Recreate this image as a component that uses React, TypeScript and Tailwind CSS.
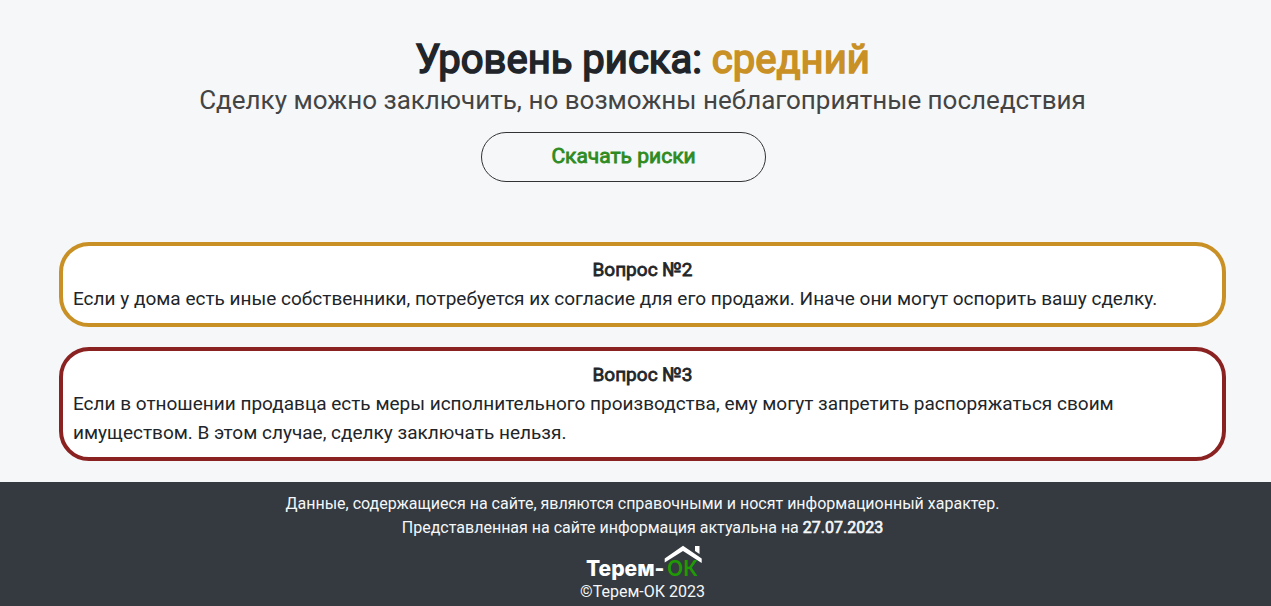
import React from "react";

type Question = { title: string; text: string; border: string };

const questions: Question[] = [
  {
    title: "Вопрос №2",
    text: "Если у дома есть иные собственники, потребуется их согласие для его продажи. Иначе они могут оспорить вашу сделку.",
    border: "border-[#c99125]",
  },
  {
    title: "Вопрос №3",
    text: "Если в отношении продавца есть меры исполнительного производства, ему могут запретить распоряжаться своим имуществом. В этом случае, сделку заключать нельзя.",
    border: "border-[#8b2222]",
  },
];

function Logo() {
  return (
    <svg viewBox="0 0 120 40" className="h-10 w-[120px] font-['Inter','Open_Sans',sans-serif]" role="img" aria-label="Терем-ОК">
      <text x="3" y="36" fontSize="21" fontWeight="800" fill="#fff">
        Терем-
      </text>
      <text x="84" y="36" fontSize="21" fontWeight="600" fill="#1f9a05">
        ОК
      </text>
      <path d="M81.700 22.500V18.500L100 5.800L118.700 18.500V23L100 11Z" fill="#fff" />
      <path d="M112 6H116.500V14L112 11Z" fill="#fff" />
    </svg>
  );
}

export default function App() {
  return (
    <div className="flex min-h-screen flex-col bg-[#f5f7f9] font-['Roboto','Liberation_Sans',sans-serif] text-[#212529]">
      <main className="pt-9 pr-[45px] pb-[21px] pl-[59px]">
        <header className="text-center">
          <h1 className="text-[40px] leading-12 font-normal [-webkit-text-stroke-width:0.04em]">
            Уровень риска: <span className="text-[#c99125]">средний</span>
          </h1>
          <p className="text-[26px] leading-8 text-[#444]">Сделку можно заключить, но возможны неблагоприятные последствия</p>
        </header>
        <div className="mt-4 flex justify-center pr-[38px]">
          <button className="h-[50px] w-[285px] rounded-full border border-[#333] text-[21px] text-[#2e8b22] [-webkit-text-stroke-width:0.04em]">
            Скачать риски
          </button>
        </div>
        <div className="mt-[60px] flex flex-col gap-5">
          {questions.map((q) => (
            <section key={q.title} className={`rounded-[30px] border-4 bg-white p-[10px] text-[19px] leading-[29px] ${q.border}`}>
              <h2 className="text-center leading-7 font-normal [-webkit-text-stroke-width:0.04em]">{q.title}</h2>
              <p>{q.text}</p>
            </section>
          ))}
        </div>
      </main>
      <footer className="flex grow flex-col items-center bg-[#343a40] pt-[10px] pb-[2px] pl-[14px] text-center text-base leading-6 text-[#f5f7f9]">
        <p>Данные, содержащиеся на сайте, являются справочными и носят информационный характер.</p>
        <p>
          Представленная на сайте информация актуальна на{" "}
          <strong className="font-normal [-webkit-text-stroke-width:0.04em]">27.07.2023</strong>
        </p>
        <Logo />
        <p>©Терем-ОК 2023</p>
      </footer>
    </div>
  );
}
